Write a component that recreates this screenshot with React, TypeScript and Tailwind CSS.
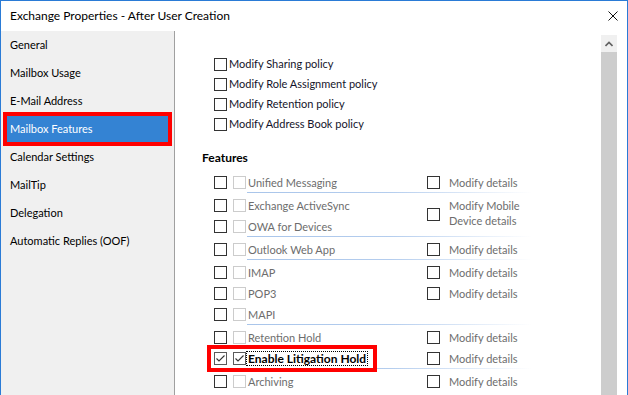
import clsx from "clsx";

type Row = { label: string; detail?: boolean; checked?: boolean };
type Group = { rows: Row[]; shared?: boolean };

const navItems = [
  "General",
  "Mailbox Usage",
  "E-Mail Address",
  "Mailbox Features",
  "Calendar Settings",
  "MailTip",
  "Delegation",
  "Automatic Replies (OOF)",
];

const policies = [
  "Modify Sharing policy",
  "Modify Role Assignment policy",
  "Modify Retention policy",
  "Modify Address Book policy",
];

const groups: Group[] = [
  { rows: [{ label: "Unified Messaging", detail: true }] },
  {
    rows: [{ label: "Exchange ActiveSync" }, { label: "OWA for Devices" }],
    shared: true,
  },
  { rows: [{ label: "Outlook Web App", detail: true }] },
  {
    rows: [
      { label: "IMAP", detail: true },
      { label: "POP3", detail: true },
      { label: "MAPI" },
    ],
  },
  {
    rows: [
      { label: "Retention Hold", detail: true },
      { label: "Enable Litigation Hold", detail: true, checked: true },
    ],
  },
  { rows: [{ label: "Archiving", detail: true }] },
];

const Box = ({ checked, disabled }: { checked?: boolean; disabled?: boolean }) => (
  <span
    className={clsx(
      "flex h-[13px] w-[13px] shrink-0 items-center justify-center border bg-white",
      disabled && !checked ? "border-[#cccccc]" : checked ? "border-[#5a5a5a]" : "border-[#333333]"
    )}
  >
    {checked && (
      <svg width="11" height="11" viewBox="0 0 11 11">
        <polyline points="1.5,5.5 4,8 9.5,2.5" fill="none" stroke="#333" strokeWidth="1.1" />
      </svg>
    )}
  </span>
);

const Detail = ({ text }: { text: string }) => (
  <div className="flex items-center gap-[9px]">
    <Box />
    <span className="text-[#6d6d6d] leading-[15px]">{text}</span>
  </div>
);

const FeatureLeft = ({ row }: { row: Row }) => (
  <div
    className={clsx(
      "flex w-[162px] items-center pl-[3px]",
      row.checked && "my-px h-[19px] outline-4 outline-[#ff0000]"
    )}
  >
    <Box checked={row.checked} />
    <span className="ml-[6px]">
      <Box checked={row.checked} disabled />
    </span>
    <span
      className={clsx(
        "border px-px leading-[13px] whitespace-nowrap",
        row.checked
          ? "border-dotted border-black text-[12px] font-bold text-black"
          : "border-transparent text-[#6d6d6d]"
      )}
    >
      {row.label}
    </span>
  </div>
);

const Separator = () => (
  <div className="-mt-px ml-[72px] h-px w-[285px] bg-linear-to-r from-[#a9c5ea] via-[#b4cdee] to-transparent" />
);

export default function App() {
  return (
    <div
      className="flex h-[395px] w-[628px] flex-col overflow-hidden border-x border-t border-[#2a7bd6] bg-white text-[11px] text-black"
      style={{ fontFamily: 'Lato, "Noto Sans", sans-serif' }}
    >
      <div className="flex h-[30px] shrink-0 items-center justify-between pl-[9px] pr-[9px] text-[12px]">
        <span>Exchange Properties - After User Creation</span>
        <svg width="10" height="10" viewBox="0 0 10 10">
          <path d="M0.5 0.5 L9.5 9.5 M9.5 0.5 L0.5 9.5" stroke="#111" strokeWidth="1" />
        </svg>
      </div>

      <div className="flex flex-1">
        <div className="w-[174px] shrink-0 border-r border-[#a0a0a0] bg-[#f0f0f0]">
          {navItems.map((item) =>
            item === "Mailbox Features" ? (
              <div
                key={item}
                className="mx-[6px] my-px flex h-[26px] items-center bg-[#3483d3] pl-[3px] text-white outline-4 outline-[#ff0000]"
              >
                {item}
              </div>
            ) : (
              <div key={item} className="flex h-[28px] items-center pl-[9px]">
                {item}
              </div>
            )
          )}
        </div>

        <div className="flex flex-1">
          <div className="flex-1 pt-[23px]">
            {policies.map((p) => (
              <div key={p} className="flex h-[20px] items-center pl-[39px]">
                <Box />
                <span className="ml-[2px] text-[#14142a]">{p}</span>
              </div>
            ))}

            <div className="mt-[14px] flex h-[20px] items-center pl-[27px] text-[12px] font-bold">
              Features
            </div>

            <div className="mt-[4px]">
              {groups.map((g, gi) => (
                <div key={gi} className={gi > 0 ? "pt-[2px]" : ""}>
                  {g.shared ? (
                    <div className="flex">
                      <div className="w-[252px] pl-[36px]">
                        {g.rows.map((r) => (
                          <div key={r.label} className="flex h-[21px] items-center">
                            <FeatureLeft row={r} />
                          </div>
                        ))}
                      </div>
                      <div className="-mt-[3px] flex items-center gap-[9px]">
                        <Box />
                        <span className="pb-[4px] leading-[15px] text-[#6d6d6d]">
                          Modify Mobile
                          <br />
                          Device details
                        </span>
                      </div>
                    </div>
                  ) : (
                    g.rows.map((r) => (
                      <div key={r.label} className="flex h-[21px] items-center pl-[36px]">
                        <div className="w-[216px]">
                          <FeatureLeft row={r} />
                        </div>
                        {r.detail && <Detail text="Modify details" />}
                      </div>
                    ))
                  )}
                  {gi < groups.length - 1 && <Separator />}
                </div>
              ))}
            </div>
          </div>

          <div className="mr-[10px] mt-[4px] flex w-[16px] shrink-0 flex-col bg-[#f0f0f0]">
            <div className="flex h-[17px] items-center justify-center">
              <svg width="8" height="6" viewBox="0 0 8 6">
                <polyline points="0.5,5 4,1.5 7.5,5" fill="none" stroke="#606060" strokeWidth="1.6" />
              </svg>
            </div>
            <div className="flex-1 bg-[#cdcdcd]" />
          </div>
        </div>
      </div>
    </div>
  );
}
